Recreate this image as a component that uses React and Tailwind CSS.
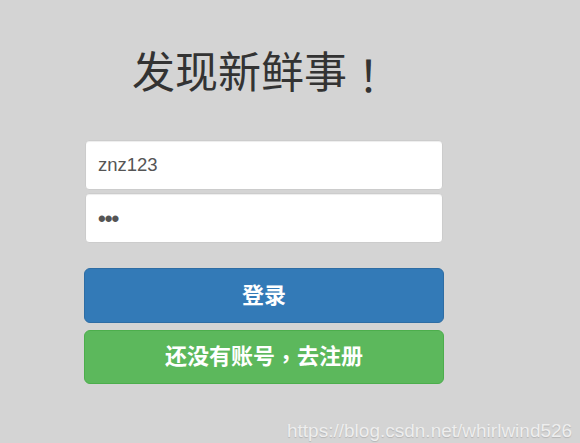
export default function App() {
  const font = { fontFamily: '"Liberation Sans", "Noto Sans CJK SC", sans-serif' };
  const tc = { fontFamily: '"Noto Sans CJK TC", sans-serif' };
  return (
    <div className="relative h-[443px] w-[580px] overflow-hidden bg-[#d4d4d4]" style={font}>
      <div className="ml-[85px] w-[358px] pt-[48px]">
        <h1 className="flex h-[50px] items-center justify-center pr-[6px] text-[43px] leading-[50px] font-normal text-[#333]">
          <span>发现新鲜事</span>
          <span style={tc} className="leading-[50px]">！</span>
        </h1>
        <div className="mt-[42px] flex flex-col gap-[3px]">
          <div className="flex h-[50px] items-center rounded-[4px] border border-[#ccc] bg-white px-[12px] text-[18.5px] text-[#555] shadow-[inset_0_1px_1px_rgba(0,0,0,0.075)]">
            znz123
          </div>
          <div className="flex h-[50px] items-center rounded-[4px] border border-[#ccc] bg-white px-[12px] text-[#555] shadow-[inset_0_1px_1px_rgba(0,0,0,0.075)]">
            <span className="text-[22px] font-bold tracking-[-1px]">•••</span>
          </div>
        </div>
        <div className="-ml-[1px] mt-[25px] flex w-[360px] flex-col gap-[7px]">
          <div className="flex h-[55px] items-center justify-center rounded-[6px] border border-[#2e6da4] bg-[#337ab7] text-[22px] leading-[24px] font-bold text-white">
            登录
          </div>
          <div className="flex h-[54px] items-center justify-center rounded-[6px] border border-[#4cae4c] bg-[#5cb85c] text-[22px] leading-[24px] font-bold text-white">
            还没有账号<span style={tc} className="leading-[24px]">，</span>去注册
          </div>
        </div>
      </div>
      <div className="absolute left-[287px] top-[417px] text-[19px] text-[#eeeeee] [text-shadow:0_1px_1px_rgba(0,0,0,0.15)]">
        https://blog.csdn.net/whirlwind526
      </div>
    </div>
  );
}
